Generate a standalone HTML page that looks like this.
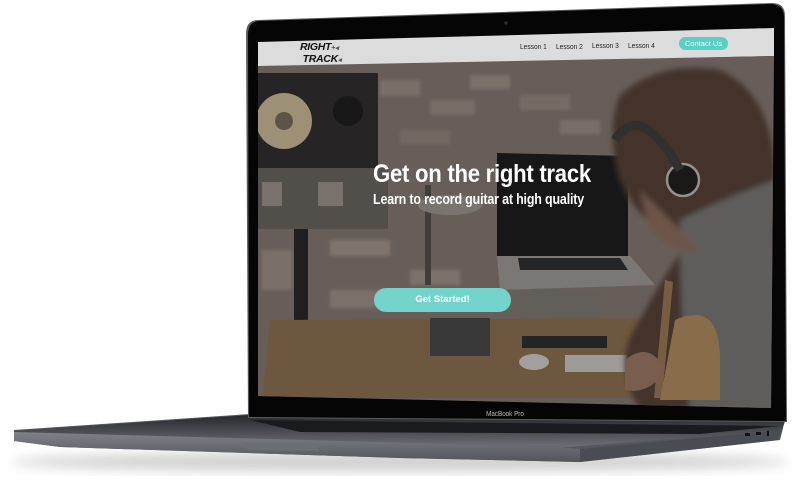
<!DOCTYPE html>
<html><head><meta charset="utf-8"><style>
html,body{margin:0;padding:0;background:#fff;}
body{width:799px;height:485px;overflow:hidden;position:relative;font-family:"Liberation Sans",sans-serif;}
svg{position:absolute;left:0;top:0;}
.t{position:absolute;color:#fff;font-weight:bold;white-space:nowrap;font-family:"Liberation Sans",sans-serif;transform-origin:0 0;}
</style></head><body>
<svg width="799" height="485" viewBox="0 0 799 485">
<defs>
<filter id="b1" x="-20%" y="-20%" width="140%" height="140%"><feGaussianBlur stdDeviation="6"/></filter>
<filter id="b2"><feGaussianBlur stdDeviation="1.5"/></filter>
<filter id="b3"><feGaussianBlur stdDeviation="3"/></filter>
<clipPath id="scr"><polygon points="258,66 774,56 771,408 258,396"/></clipPath>
<linearGradient id="front" x1="0" y1="0" x2="0" y2="1"><stop offset="0" stop-color="#80828a"/><stop offset="1" stop-color="#52545a"/></linearGradient>
<linearGradient id="top" x1="0" y1="0" x2="0" y2="1"><stop offset="0" stop-color="#26272b"/><stop offset="1" stop-color="#6e7077"/></linearGradient>
</defs>
<ellipse cx="400" cy="462" rx="390" ry="10" fill="#000" opacity="0.18" filter="url(#b1)"/>
<polygon points="14,430 250,414 785,420 780,440 580,462 400,458 60,447 14,441" fill="#55575e"/>
<polygon points="14,431 250,415 785,421 782,430 570,447 14,433" fill="url(#top)"/>
<polygon points="14,432 560,447 580,449 580,462 400,458 60,447 14,441" fill="url(#front)"/>
<polygon points="580,449 782,430 778,440 580,462" fill="#4a4c53"/>
<polygon points="245,443 320,444 318,451 248,450" fill="#6c6e75"/>
<rect x="745" y="433" width="5" height="3" fill="#111"/><rect x="756" y="432" width="5" height="3" fill="#111"/><rect x="767" y="431" width="2" height="5" fill="#111"/>
<polygon points="250,420 780,426 700,434 300,432" fill="#1a1b1e"/>
<path d="M258,20 L772,3 Q785,3 785,16 L787,422 L248,418 L246,34 Q246,20 258,20 Z" fill="#5a5c60"/>
<path d="M260,21 L770,4 Q784,4 784,17 L786,421 L249,417 L248,35 Q248,21 260,21 Z" fill="#050505"/>
<circle cx="506" cy="23" r="1.6" fill="#2a3040"/>
<text x="505" y="416" font-size="7" fill="#bbb" text-anchor="middle" font-family="Liberation Sans" transform="translate(505 0) scale(0.9 1) translate(-505 0)">MacBook Pro</text>
<polygon points="258,42 774,28 774,56 258,68" fill="#dcdcdc"/>
<g clip-path="url(#scr)">
<rect x="250" y="50" width="540" height="370" fill="#776c66"/>
<g filter="url(#b2)" opacity="0.55">
<rect x="380" y="80" width="40" height="16" fill="#9b8e86"/><rect x="430" y="100" width="45" height="15" fill="#978a82"/>
<rect x="470" y="75" width="40" height="14" fill="#a09289"/><rect x="520" y="95" width="50" height="15" fill="#948780"/>
<rect x="560" y="120" width="40" height="14" fill="#9c8f86"/><rect x="400" y="130" width="50" height="14" fill="#8c8079"/>
<rect x="330" y="240" width="60" height="16" fill="#a89a90"/><rect x="410" y="270" width="50" height="15" fill="#a3958b"/>
<rect x="262" y="250" width="30" height="40" fill="#9e9188"/><rect x="330" y="290" width="60" height="18" fill="#a0928a"/>
</g>
<rect x="258" y="73" width="120" height="95" fill="#2c2a2a"/>
<circle cx="284" cy="121" r="28" fill="#b3a488"/>
<circle cx="284" cy="121" r="9" fill="#6a6052"/>
<circle cx="348" cy="111" r="15" fill="#1d1c1c"/>
<rect x="258" y="168" width="130" height="61" fill="#5e5955"/>
<rect x="262" y="182" width="20" height="24" fill="#8a827c"/><rect x="318" y="182" width="25" height="24" fill="#8a827c"/>
<rect x="294" y="229" width="14" height="92" fill="#252323"/>
<rect x="425" y="185" width="6" height="100" fill="#4a4644"/>
<ellipse cx="450" cy="205" rx="32" ry="10" fill="#8a8480"/>
<polygon points="497,153 628,156 628,256 497,256" fill="#1c1b1c"/>
<polygon points="497,256 630,256 655,285 500,290" fill="#8b8885"/>
<polygon points="518,258 620,258 628,270 520,270" fill="#2c2b2b"/>
<rect x="520" y="290" width="80" height="30" fill="#6e6b68" opacity="0.7"/>
<polygon points="270,320 690,318 700,398 262,398" fill="#7e6448"/>
<rect x="430" y="318" width="60" height="38" fill="#434142"/>
<rect x="522" y="336" width="85" height="12" fill="#2a2a2c"/>
<ellipse cx="534" cy="362" rx="15" ry="8" fill="#b9b7b6"/>
<rect x="565" y="355" width="62" height="17" fill="#b3b1ae"/>
<g filter="url(#b3)">
<path d="M620,95 Q660,60 720,70 Q775,95 775,180 L775,410 L640,410 Q610,360 640,320 Q660,280 690,240 Q640,230 620,180 Q605,130 620,95 Z" fill="#4e3b31"/>
<path d="M680,220 Q720,200 775,180 L775,410 L690,410 Q680,320 680,220 Z" fill="#6d6a69"/>
<path d="M640,190 Q690,240 700,250 Q680,260 650,230 Z" fill="#7c6052"/>
</g>
<circle cx="683" cy="180" r="16" fill="#1f1c1c" stroke="#aaa6a2" stroke-width="2.5"/>
<path d="M615,140 Q640,100 680,170" stroke="#3a3636" stroke-width="9" fill="none"/>
<polygon points="665,280 673,282 662,398 654,398" fill="#8a6a4c"/>
<path d="M675,320 Q720,300 720,360 L720,400 L660,400 Z" fill="#9c7d56"/>
<path d="M625,360 Q650,340 665,370 Q650,395 625,390 Z" fill="#8a6a5a"/>
<rect x="250" y="50" width="540" height="370" fill="#000" opacity="0.12"/>
</g>
</svg>
<div class="t" style="left:300px;top:42px;color:#111;font-size:10.5px;font-style:italic;line-height:10px;letter-spacing:-0.3px;">RIGHT<span style="font-size:7px;color:#555">+◂</span><br>&nbsp;TRACK<span style="font-size:7px;color:#555">◂</span></div>
<div class="t" style="left:520px;top:42px;color:#222;font-size:7.5px;font-weight:normal;transform:scaleX(0.88);">Lesson 1</div>
<div class="t" style="left:556px;top:41.5px;color:#222;font-size:7.5px;font-weight:normal;transform:scaleX(0.88);">Lesson 2</div>
<div class="t" style="left:592px;top:41px;color:#222;font-size:7.5px;font-weight:normal;transform:scaleX(0.88);">Lesson 3</div>
<div class="t" style="left:628px;top:40.5px;color:#222;font-size:7.5px;font-weight:normal;transform:scaleX(0.88);">Lesson 4</div>
<div class="t" style="left:679px;top:37px;width:49px;height:13px;background:#5ccfc4;border-radius:7px;font-size:7.5px;font-weight:normal;text-align:center;line-height:13px;">Contact Us</div>
<div class="t" style="left:373px;top:160px;font-size:25px;letter-spacing:-0.3px;transform:scaleX(0.885);">Get on the right track</div>
<div class="t" style="left:373px;top:192px;font-size:14.5px;letter-spacing:-0.2px;transform:scaleX(0.86);">Learn to record guitar at high quality</div>
<div class="t" style="left:374px;top:288px;width:137px;height:24px;background:#74d4cb;border-radius:12px;font-size:9.5px;text-align:center;line-height:24px;">Get Started!</div>
</body></html>
